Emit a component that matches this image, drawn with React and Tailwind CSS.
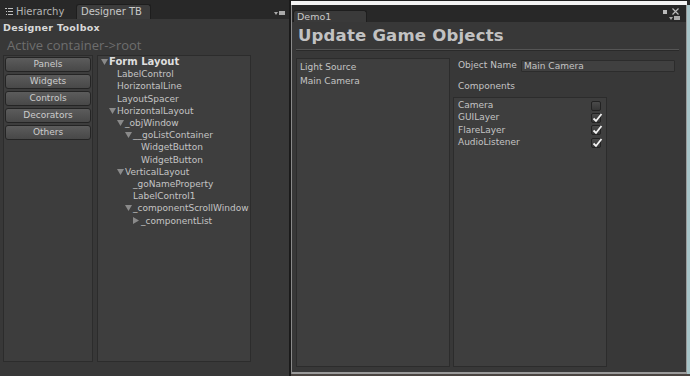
import React from "react";

const font = { fontFamily: '"DejaVu Sans", "Liberation Sans", sans-serif' };

function Tri({ open }) {
  return open ? (
    <svg width="7" height="6" viewBox="0 0 7 6" className="shrink-0"><path d="M0 0H7L3.5 6Z" fill="#8a8a8a" /></svg>
  ) : (
    <svg width="6" height="7" viewBox="0 0 6 7" className="shrink-0"><path d="M0 0V7L6 3.5Z" fill="#8a8a8a" /></svg>
  );
}

const tree = [
  { t: "Form Layout", i: 0, a: "open", bold: true },
  { t: "LabelControl", i: 1 },
  { t: "HorizontalLine", i: 1 },
  { t: "LayoutSpacer", i: 1 },
  { t: "HorizontalLayout", i: 1, a: "open" },
  { t: "_objWindow", i: 2, a: "open" },
  { t: "__goListContainer", i: 3, a: "open" },
  { t: "WidgetButton", i: 4 },
  { t: "WidgetButton", i: 4 },
  { t: "VerticalLayout", i: 2, a: "open" },
  { t: "_goNameProperty", i: 3 },
  { t: "LabelControl1", i: 3 },
  { t: "_componentScrollWindow", i: 3, a: "open" },
  { t: "_componentList", i: 4, a: "closed" },
];

function Check({ on }) {
  return (
    <div className="w-[10px] h-[10px] rounded-[2px] border border-[#222] bg-gradient-to-b from-[#4a4a4a] to-[#363636] relative">
      {on && (
        <svg width="11" height="10" viewBox="0 0 11 10" className="absolute left-[0px] top-[-1px]">
          <path d="M1.5 5.5L4 8L9.5 1" stroke="#f2f2f2" strokeWidth="1.8" fill="none" />
        </svg>
      )}
    </div>
  );
}

export default function App() {
  return (
    <div className="w-[690px] h-[376px] bg-[#383838] flex overflow-hidden text-[#c4c4c4]" style={font}>
      {/* Left window */}
      <div className="w-[289px] flex flex-col">
        <div className="h-[19px] bg-[#282828] flex items-end relative">
          <div className="flex items-center gap-[3px] pl-[5px] h-[15px] text-[10px] text-[#b4b4b4] w-[76px]">
            <svg width="8" height="7" viewBox="0 0 8 7"><path d="M0 0.5H2M3 0.5H8M1 3.5H2M3 3.5H8M1 6.5H2M3 6.5H8" stroke="#c0c0c0" strokeWidth="1" /></svg>
            <span>Hierarchy</span>
          </div>
          <div className="w-[75px] h-[15px] bg-[#3c3c3c] rounded-t-[3px] border border-b-0 border-[#1e1e1e] text-[10px] text-[#c8c8c8] pl-[4px] leading-[13px]">Designer TB</div>
          <div className="absolute right-[4px] top-[11px] flex items-center gap-[1px]">
            <svg width="4" height="3" viewBox="0 0 4 3"><path d="M0 0H4L2 3Z" fill="#aaa" /></svg>
            <div className="w-[6px] h-[4px] bg-[#aaa]" />
          </div>
        </div>
        <div className="flex-1 flex flex-col px-[3px]">
          <div className="text-[9.5px] font-bold text-[#d8d8d8] mt-[3px] leading-[12px] tracking-[0.3px]">Designer Toolbox</div>
          <div className="text-[13px] text-[#6e6e6e] pl-[4px] leading-[16px] mt-[3px]" style={{ fontFamily: '"Open Sans", sans-serif' }}>Active container-&gt;root</div>
          <div className="flex gap-[4px] mt-[2px] h-[307px]">
            <div className="w-[90px] bg-[#3d3d3d] border border-[#2c2c2c] flex flex-col gap-[2px] px-[1px] pt-[1px]">
              {["Panels", "Widgets", "Controls", "Decorators", "Others"].map((b) => (
                <div key={b} className="h-[15px] rounded-[3px] border border-[#242424] bg-gradient-to-b from-[#5c5c5c] to-[#484848] text-[9px] text-[#cccccc] flex items-center justify-center">{b}</div>
              ))}
            </div>
            <div className="w-[154px] bg-[#3e3e3e] border border-[#2c2c2c] pt-[0px]">
              {tree.map((n, k) => (
                <div key={k} className="h-[12.2px] flex items-center text-[9px] leading-[12px]" style={{ paddingLeft: 3 + n.i * 8 }}>
                  <div className="w-[8px] flex items-center">{n.a && <Tri open={n.a === "open"} />}</div>
                  <span className={n.bold ? "font-bold text-[10px] text-[#dedede]" : ""}>{n.t}</span>
                </div>
              ))}
            </div>
          </div>
        </div>
      </div>
      {/* divider */}
      <div className="w-[2px] bg-[#1a1a1a]" />
      {/* Right window */}
      <div className="flex-1 flex flex-col bg-[#2a2a2a]">
        <div className="h-[1px] bg-[#222]" />
        <div className="h-[4px] bg-[#f4f4f4] mr-[3px]" />
        <div className="flex-1 flex border-l border-[#8a8a8a]">
          <div className="flex-1 flex flex-col">
            <div className="h-[17px] bg-[#282828] flex items-end relative">
              <div className="w-[74px] h-[12px] bg-[#3a3a3a] rounded-t-[3px] border border-b-0 border-[#1e1e1e] text-[9.5px] text-[#c8c8c8] pl-[3px] leading-[11px] ml-[1px]">Demo1</div>
              <div className="absolute right-[7px] top-[3px] flex items-center gap-[5px]">
                <div className="w-[4px] h-[4px] bg-[#bbb]" />
                <svg width="7" height="7" viewBox="0 0 7 7"><path d="M0.5 0.5L6.5 6.5M6.5 0.5L0.5 6.5" stroke="#bbb" strokeWidth="1.2" /></svg>
              </div>
              <div className="absolute right-[6px] top-[11px] flex items-center gap-[1px]">
                <svg width="4" height="3" viewBox="0 0 4 3"><path d="M0 0H4L2 3Z" fill="#aaa" /></svg>
                <div className="w-[6px] h-[4px] bg-[#aaa]" />
              </div>
            </div>
            <div className="flex-1 bg-[#383838] flex flex-col px-[4px] border-b-[2px] border-[#9a9a9a]">
              <div className="text-[16.5px] font-bold text-[#c2c2c2] leading-[22px] mt-[3px] pl-[2px] tracking-[0.2px]">Update Game Objects</div>
              <div className="h-[2px] border-t border-[#555] border-b border-b-[#2a2a2a] mt-[2px] mr-[3px]" />
              <div className="flex gap-[3px] mt-[7px] flex-1 mb-[5px]">
                <div className="w-[154px] bg-[#3e3e3e] border border-[#2c2c2c] pt-[1px] pl-[3px] text-[9px] leading-[14px]">
                  <div>Light Source</div>
                  <div>Main Camera</div>
                </div>
                <div className="flex-1 flex flex-col">
                  <div className="flex items-center text-[9px] mt-[1px] pl-[5px]">
                    <span className="w-[63px]">Object Name</span>
                    <div className="w-[154px] h-[12px] bg-[#404040] border border-[#2c2c2c] pl-[2px] leading-[10px] rounded-[1px]">Main Camera</div>
                  </div>
                  <div className="text-[9px] pl-[5px] mt-[7px] leading-[12px]">Components</div>
                  <div className="w-[154px] flex-1 bg-[#3e3e3e] border border-[#2c2c2c] mt-[5px] pt-[2px] pl-[4px] pr-[5px] text-[9px]">
                    {[["Camera", false], ["GUILayer", true], ["FlareLayer", true], ["AudioListener", true]].map(([l, c]) => (
                      <div key={l} className="h-[12.3px] flex items-center justify-between">
                        <span>{l}</span>
                        <Check on={c} />
                      </div>
                    ))}
                  </div>
                </div>
              </div>
            </div>
          </div>
          <div className="w-[1px] bg-[#9a9a9a]" />
          <div className="w-[3px] bg-[#a7c4c8]" />
        </div>
        <div className="h-[2px] bg-[#4a4440]" />
      </div>
    </div>
  );
}
